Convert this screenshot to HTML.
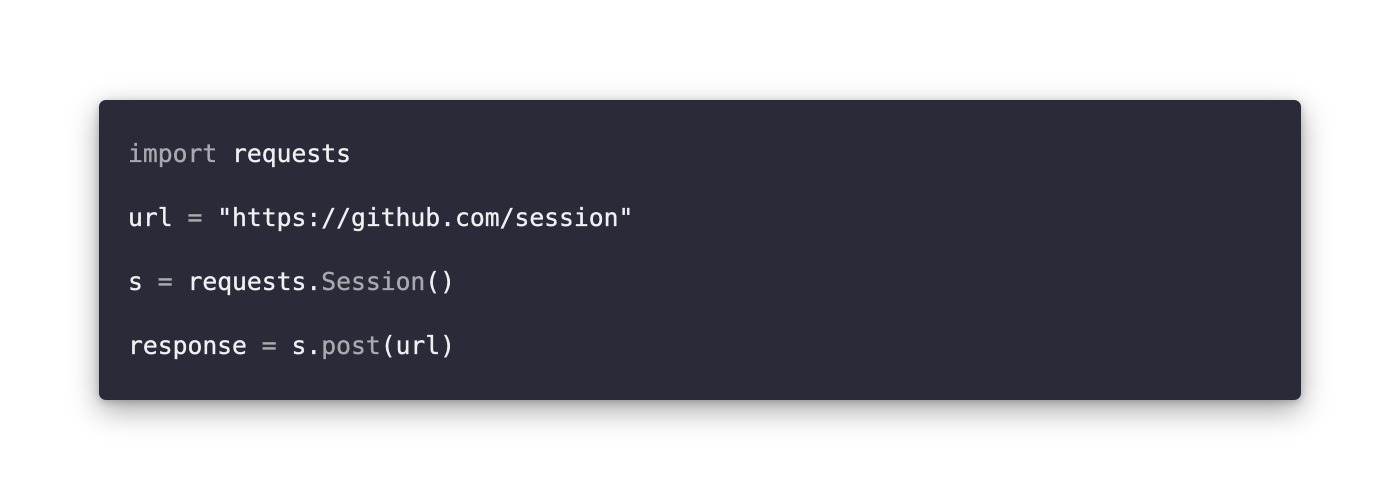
<!DOCTYPE html>
<html><head><style>
html,body{margin:0;width:1400px;height:500px;background:#fff;overflow:hidden}
.card{position:absolute;left:99px;top:100px;width:1202px;height:300px;background:#292b38;border-radius:7px;box-shadow:0 10px 30px rgba(0,0,0,0.35),0 2px 8px rgba(0,0,0,0.2)}
pre{position:absolute;left:128px;top:122px;margin:0;font-family:"DejaVu Sans Mono","Liberation Mono",monospace;font-size:24.7px;line-height:64px;color:#f0f0f2;-webkit-text-stroke:0.35px currentColor}
.g{color:#a9a9ae}
</style></head><body>
<div class="card"></div>
<pre><span class="g">import</span> requests
url <span class="g">=</span> "https://github.com/session"
s <span class="g">=</span> requests.<span class="g">Session</span>()
response <span class="g">=</span> s.<span class="g">post</span>(url)</pre>
</body></html>
